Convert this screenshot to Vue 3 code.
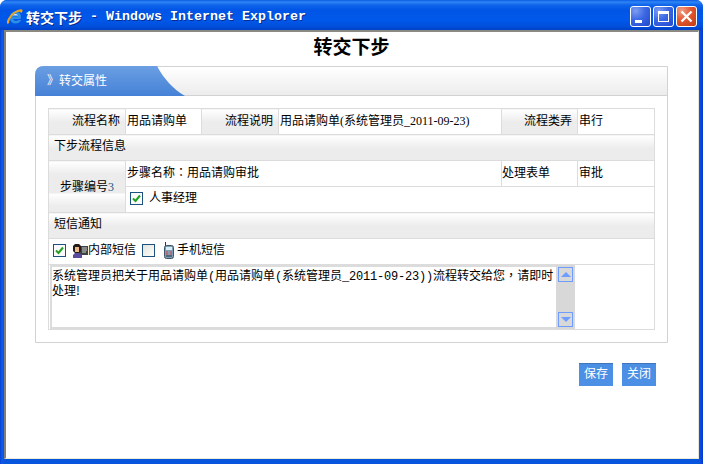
<script setup>
const appName = 'Windows Internet Explorer'
</script>

<template>
  <div class="window">
    <header class="titlebar">
      <svg class="ie" width="17" height="17" viewBox="0 0 17 17">
        <path d="M4.2 9.6A5.4 5.4 0 1 1 14.4 11H7.2C7.6 13 10.6 13.6 12.6 11.9H15C13.6 15.6 8.6 16.4 5.8 14.2C4 12.8 3.8 11 4.2 9.6ZM7.2 8.4H11.6C11.2 6.2 7.8 6.2 7.2 8.4Z" fill="#2c8fe6" fill-rule="evenodd" />
        <path d="M7 7.6H11.8C11.2 5.6 7.8 5.6 7 7.6Z" fill="#d8efff" />
        <path d="M1.2 15.6C-.2 13.4 3.6 6.2 9.6 3C12.6 1.4 15.6.6 16.4 1.8C17 2.8 15.8 4.4 15 5.2C15 3.6 13 3.2 10.6 4.4C6.4 6.4 3.4 11 3.2 14.2C2.8 15.4 1.8 16.2 1.2 15.6Z" fill="#eda51f" />
      </svg>
      <h1 class="wintitle"><span class="cjk">转交下步</span><span class="latin"> - {{ appName }}</span></h1>
      <div class="winbtns">
        <span class="winbtn"><i class="min"></i></span>
        <span class="winbtn"><i class="max"></i></span>
        <span class="winbtn close">
          <svg width="15" height="15" viewBox="0 0 15 15"><path d="M2.5 2.5L12.5 12.5M12.5 2.5L2.5 12.5" stroke="#fff" stroke-width="2.4" /></svg>
        </span>
      </div>
    </header>

    <main class="client">
      <h2 class="heading">转交下步</h2>

      <section class="panel">
        <div class="panel-head">
          <svg class="tab" width="150" height="30" viewBox="0 0 150 30">
            <defs>
              <linearGradient id="tabfill" x1="0" y1="0" x2="0" y2="1">
                <stop offset="0" stop-color="#6b9fe2" />
                <stop offset="1" stop-color="#4581d7" />
              </linearGradient>
            </defs>
            <path d="M0 9Q0 0 9 0H122C129 13 138 23 150 30H0Z" fill="url(#tabfill)" />
          </svg>
          <span class="tab-text"><span class="tab-mark">》</span>转交属性</span>
        </div>

        <div class="panel-body">
          <table class="form">
            <colgroup>
              <col class="c1" /><col class="c2" /><col class="c3" /><col class="c4" /><col class="c5" /><col class="c6" />
            </colgroup>
            <tbody>
              <tr>
                <th class="label">流程名称</th>
                <td>用品请购单</td>
                <th class="label">流程说明</th>
                <td>用品请购单<span class="serif">(</span>系统管理员<span class="serif">_2011-09-23)</span></td>
                <th class="label">流程类弄</th>
                <td>串行</td>
              </tr>
              <tr>
                <th class="section" colspan="6">下步流程信息</th>
              </tr>
              <tr>
                <th class="label center" rowspan="2">步骤编号<span class="num">3</span></th>
                <td colspan="3">步骤名称<span class="tc">：</span>用品请购审批</td>
                <td class="tight">处理表单</td>
                <td>审批</td>
              </tr>
              <tr>
                <td colspan="5">
                  <div class="check-row indent">
                    <span class="check on">
                      <svg width="11" height="11" viewBox="0 0 11 11"><path d="M2 5.5L4.5 8L9 2.5" fill="none" stroke="#21a121" stroke-width="2" /></svg>
                    </span>
                    <span class="raise">人事经理</span>
                  </div>
                </td>
              </tr>
              <tr>
                <th class="section" colspan="6">短信通知</th>
              </tr>
              <tr>
                <td colspan="6">
                  <div class="notify">
                    <span class="check on">
                      <svg width="11" height="11" viewBox="0 0 11 11"><path d="M2 5.5L4.5 8L9 2.5" fill="none" stroke="#21a121" stroke-width="2" /></svg>
                    </span>
                    <span class="inner">
                      <svg width="16" height="15" viewBox="0 0 16 15">
                        <rect x="6" y="3" width="10" height="9" fill="#3f4245" />
                        <path d="M10 5h5M10 7h5M10 9h4" stroke="#cfcfcf" />
                        <path d="M1 8V3L3 1H7L9 3V8L7 10H3Z" fill="#231c18" />
                        <rect x="3" y="4" width="4" height="5" fill="#eeb98a" />
                        <path d="M1 15V12L3 10H7L10 12V15Z" fill="#5b4a9c" />
                      </svg>
                      <span class="raise">内部短信</span>
                    </span>
                    <span class="check"></span>
                    <span class="phone">
                      <svg width="10" height="17" viewBox="0 0 10 17">
                        <rect x="1" y="0" width="1" height="4" fill="#333" />
                        <rect x="0.5" y="3.5" width="9" height="13" rx="2" fill="#7f9db4" stroke="#3e5567" />
                        <rect x="2" y="5" width="6" height="3" fill="#d6eef5" />
                        <path d="M2 10h2M6 10h2M2 12h2M6 12h2" stroke="#e04040" />
                        <path d="M2 14h6" stroke="#26323c" />
                      </svg>
                      <span class="raise">手机短信</span>
                    </span>
                  </div>
                </td>
              </tr>
              <tr>
                <td class="message-cell" colspan="6">
                  <div class="message">
                    <div class="message-text">系统管理员把关于用品请购单<span class="mono">(</span>用品请购单<span class="mono">(</span>系统管理员<span class="mono">_2011-09-23))</span>流程转交给您<span class="tc">，</span>请即时处理!</div>
                    <div class="scroll">
                      <span class="arrow"><i class="up"></i></span>
                      <span class="arrow"><i class="down"></i></span>
                    </div>
                  </div>
                </td>
              </tr>
            </tbody>
          </table>
        </div>
      </section>

      <div class="actions">
        <button class="btn" type="button">保存</button>
        <button class="btn" type="button">关闭</button>
      </div>
    </main>
  </div>
</template>

<style scoped>
.window {
  width: 703px;
  height: 464px;
  box-sizing: border-box;
  display: flex;
  flex-direction: column;
  overflow: hidden;
  border-radius: 7px 7px 0 0;
  background: linear-gradient(90deg, #0a3fd0 0, #0b5cf0 2px, #0855dd 4px, #0855dd 699px, #0a50e8 700px, #0836c8 703px);
  font-family: "Noto Sans CJK SC", "Liberation Sans", sans-serif;
  font-size: 12px;
  color: #000;
}
.titlebar {
  height: 30px;
  flex: none;
  display: flex;
  align-items: center;
  padding: 3px 6px 0 6px;
  box-sizing: border-box;
  background: linear-gradient(180deg, #0a5ae6 0, #2f86f5 2px, #0f64ea 5px, #0055e6 10px, #0058ea 20px, #0050dc 26px, #0040c8 30px);
}
.ie { flex: none; margin: 0 3px 0 0; }
.wintitle {
  margin: 0;
  flex: 1;
  font-size: 14px;
  font-weight: 700;
  line-height: 20px;
  color: #fff;
  text-shadow: 1px 1px 0 #0a2a90;
  white-space: pre;
  display: flex;
  align-items: center;
}
.cjk { font-size: 14px; }
.latin { font-family: "Liberation Mono", monospace; font-size: 13.33px; }
.winbtns { display: flex; gap: 2px; }
.winbtn {
  width: 21px;
  height: 21px;
  box-sizing: border-box;
  border: 1px solid #fff;
  border-radius: 3px;
  background: radial-gradient(circle at 25% 20%, #7d9df0 0, #3c68e4 45%, #2048cc 100%);
  display: flex;
  align-items: center;
  justify-content: center;
  position: relative;
}
.winbtn.close { background: radial-gradient(circle at 25% 20%, #f0a088 0, #e2572e 45%, #c23a14 100%); }
.min { width: 7px; height: 3px; background: #fff; margin: 9px 5px 0 0; }
.max { width: 11px; height: 11px; box-sizing: border-box; border: 1px solid #fff; border-top-width: 3px; }

.client {
  flex: 1;
  margin: 0 4px 5px 4px;
  box-sizing: border-box;
  background: #fff;
  border-left: 2px solid #808078;
  border-top: 2px solid #8a8a82;
  border-right: 1px solid #e8e6da;
  border-bottom: 1px solid #ece9d8;
  display: flex;
  flex-direction: column;
}
.heading {
  margin: 0;
  height: 34px;
  flex: none;
  padding-right: 1px;
  font-size: 19px;
  line-height: 28px;
  font-weight: 700;
  text-align: center;
  color: #000;
}
.panel {
  margin: 0 30px 0 29px;
  border: 1px solid #d2d2d2;
  border-radius: 8px 0 0 0;
}
.panel-head {
  height: 28px;
  border-bottom: 1px solid #d2d2d2;
  background: linear-gradient(180deg, #fff, #ececec);
  position: relative;
  display: flex;
  align-items: center;
}
.tab { position: absolute; left: -1px; top: -1px; }
.tab-text {
  position: relative;
  color: #fff;
  padding: 0 0 3px 11px;
  display: flex;
  align-items: center;
}
.tab-mark { width: 12px; overflow: hidden; display: block; }
.panel-body { padding: 12px; }

.form {
  width: 606px;
  table-layout: fixed;
  border-collapse: collapse;
}
.c1 { width: 77px; }
.c2 { width: 76px; }
.c3 { width: 77px; }
.c4 { width: 223px; }
.c5 { width: 76px; }
.c6 { width: 77px; }
.form th, .form td {
  border: 1px solid #dcdcdc;
  height: 26px;
  box-sizing: border-box;
  padding: 0 1px 3px;
  font-weight: 400;
  line-height: 14px;
  text-align: left;
  white-space: nowrap;
}
.form th {
  background: repeating-linear-gradient(180deg, #fff 0, #ececec 13px, #ececec 32px);
}
.form th.label { text-align: right; padding-right: 5px; }
.form th.center { text-align: center; padding: 0; }
.form th.section { padding: 0 5px 5px; }
.form td.tight { padding-left: 0; padding-bottom: 4px; }
.serif { font-family: "Liberation Serif", serif; }
.mono { font-family: "Liberation Mono", monospace; letter-spacing: -0.2px; line-height: 1; }
.tc { font-family: "Noto Sans CJK TC", sans-serif; line-height: 1; }
.num { color: #1a5a8a; font-family: "Liberation Serif", serif; }
.raise { margin-top: -3px; }

.check-row { display: flex; align-items: center; gap: 6px; }
.indent { padding-left: 3px; }
.check {
  flex: none;
  width: 13px;
  height: 13px;
  box-sizing: border-box;
  border: 1px solid #1c5180;
  background: linear-gradient(135deg, #e4e4de, #fcfcfa);
  display: inline-flex;
  align-items: center;
  justify-content: center;
}
.check.on { background: #fafafa; }
.notify { display: flex; align-items: center; padding-left: 3px; }
.inner { display: flex; align-items: center; margin-left: 6px; margin-right: 6px; }
.phone { display: flex; align-items: center; margin-left: 9px; gap: 3px; }

.form td.message-cell { height: 65px; padding: 0; vertical-align: top; }
.message { width: 525px; margin-left: 1px; height: 64px; display: flex; }
.message-text {
  width: 506px;
  box-sizing: border-box;
  border: 2px solid #dcdcdc;
  border-right: 0;
  padding: 1px 0 0 0;
  line-height: 13px;
  white-space: normal;
  word-break: break-all;
  color: #000;
}
.scroll {
  width: 19px;
  background: #d8d8d8;
  display: flex;
  flex-direction: column;
  justify-content: space-between;
  align-items: center;
  padding: 2px 0;
  box-sizing: border-box;
}
.arrow {
  width: 15px;
  height: 15px;
  box-sizing: border-box;
  border: 1px solid #6e9cff;
  display: flex;
  align-items: center;
  justify-content: center;
}
.up, .down { width: 0; height: 0; border-left: 5px solid transparent; border-right: 5px solid transparent; }
.up { border-bottom: 5px solid #6e9cff; }
.down { border-top: 5px solid #6e9cff; }

.actions {
  display: flex;
  justify-content: flex-end;
  gap: 9px;
  padding: 20px 42px 0 0;
}
.btn {
  width: 34px;
  height: 23px;
  box-sizing: border-box;
  padding: 0 0 4px;
  margin: 0;
  border: 0;
  border-top: 1px solid #3f75bb;
  background: linear-gradient(180deg, #4a8fe4, #4d90e6);
  color: #fff;
  font-family: inherit;
  font-size: 12px;
  line-height: 16px;
}
</style>

<style>
html, body { margin: 0; background: #fff; overflow: hidden; }
</style>
